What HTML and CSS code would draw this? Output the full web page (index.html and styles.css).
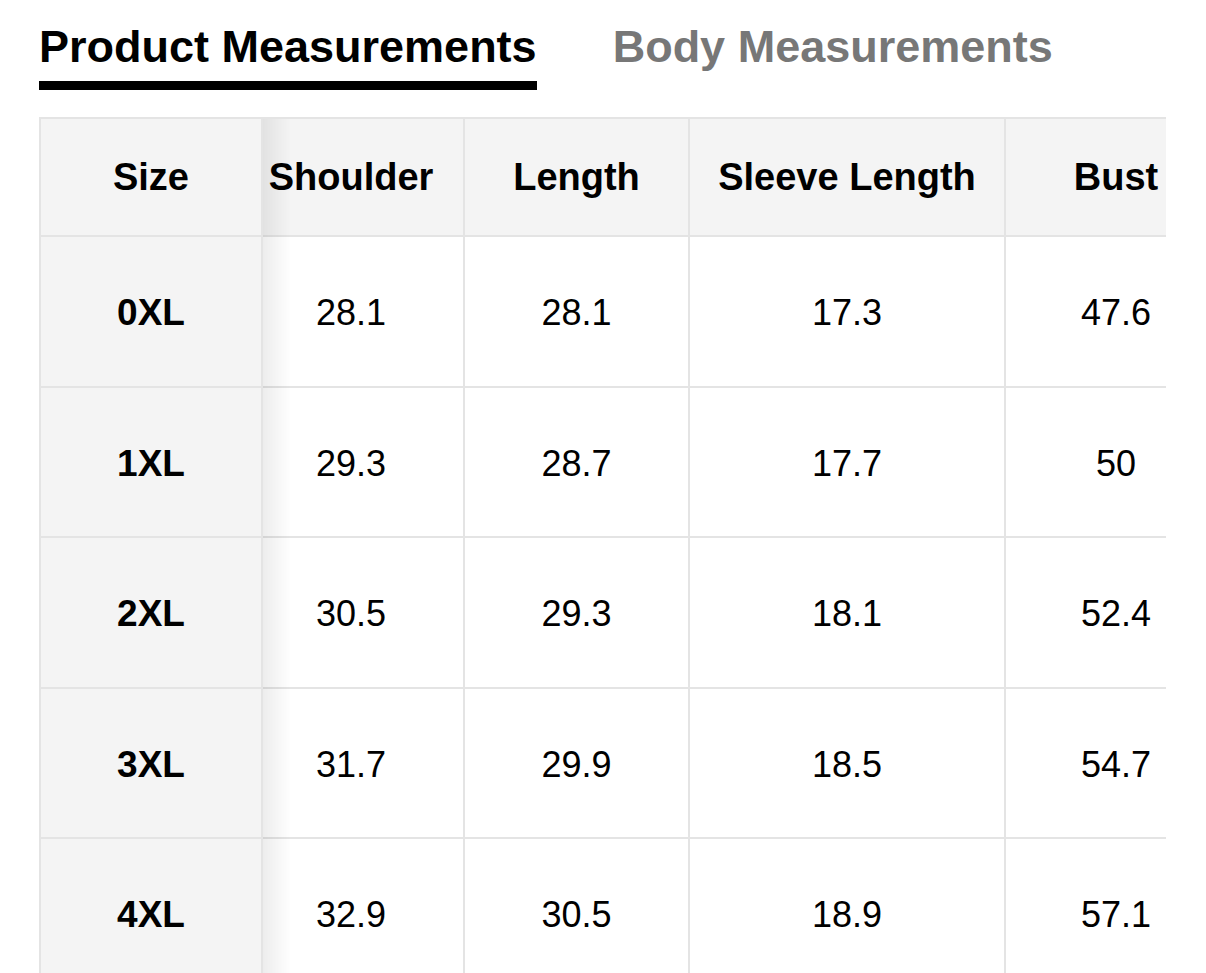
FILE: index.html
```html
<!DOCTYPE html>
<html>
<head>
<meta charset="utf-8">
<link rel="stylesheet" href="styles.css">
</head>
<body>
<div class="page">
  <div class="tabs">
    <div class="tab active">Product Measurements</div>
    <div class="tab">Body Measurements</div>
  </div>
  <div class="scroller">
    <table class="sizes">
      <colgroup>
        <col class="c-size"><col class="c-shoulder"><col class="c-length"><col class="c-sleeve"><col class="c-bust">
      </colgroup>
      <thead>
        <tr><th class="sticky">Size</th><th>Shoulder</th><th>Length</th><th>Sleeve Length</th><th>Bust</th></tr>
      </thead>
      <tbody>
        <tr><td class="sticky">0XL</td><td>28.1</td><td>28.1</td><td>17.3</td><td>47.6</td></tr>
        <tr><td class="sticky">1XL</td><td>29.3</td><td>28.7</td><td>17.7</td><td>50</td></tr>
        <tr><td class="sticky">2XL</td><td>30.5</td><td>29.3</td><td>18.1</td><td>52.4</td></tr>
        <tr><td class="sticky">3XL</td><td>31.7</td><td>29.9</td><td>18.5</td><td>54.7</td></tr>
        <tr><td class="sticky">4XL</td><td>32.9</td><td>30.5</td><td>18.9</td><td>57.1</td></tr>
      </tbody>
    </table>
  </div>
</div>
</body>
</html>
```
FILE: styles.css
```css
html, body {
  margin: 0;
  padding: 0;
  background: #fff;
}
body {
  font-family: "Liberation Sans", Arial, Helvetica, sans-serif;
  color: #000;
}
.page {
  padding: 24px 0 0 39px;
  height: 949px;
  overflow: hidden;
}
.tabs {
  display: flex;
  gap: 76px;
  align-items: flex-start;
}
.tab {
  font-size: 45px;
  line-height: 45px;
  font-weight: 700;
  color: #777;
  padding-bottom: 12px;
  border-bottom: 9px solid transparent;
  white-space: nowrap;
}
.tab.active {
  color: #000;
  border-bottom-color: #000;
}
.scroller {
  margin-top: 27px;
  width: 1127px;
  overflow: hidden;
}
.sizes {
  margin-left: -24px;
  border-collapse: separate;
  border-spacing: 0;
  table-layout: fixed;
  width: 1213px;
}
.c-size { width: 224px; }
.c-shoulder { width: 226px; }
.c-length { width: 225px; }
.c-sleeve { width: 316px; }
.c-bust { width: 222px; }
.sizes th, .sizes td {
  box-sizing: border-box;
  border-right: 2px solid #e4e4e4;
  border-bottom: 2px solid #e4e4e4;
  text-align: center;
  padding: 0;
  white-space: nowrap;
}
.sizes th {
  height: 120px;
  border-top: 2px solid #e4e4e4;
  background: #f4f4f4;
  font-size: 38px;
  font-weight: 700;
}
.sizes td {
  height: 150.5px;
  padding-top: 4px;
  font-size: 36px;
  font-weight: 400;
  background: #fff;
}
.sizes .sticky {
  position: sticky;
  left: 0;
  z-index: 2;
  background: #f4f4f4;
  border-left: 2px solid #e4e4e4;
  font-weight: 700;
  font-size: 37px;
}
.sizes th.sticky {
  font-size: 38px;
}
.sizes .sticky::after {
  content: "";
  position: absolute;
  top: 0;
  bottom: -2px;
  right: -30px;
  width: 28px;
  background: linear-gradient(to right, rgba(0, 0, 0, 0.07), rgba(0, 0, 0, 0));
  pointer-events: none;
}
```
